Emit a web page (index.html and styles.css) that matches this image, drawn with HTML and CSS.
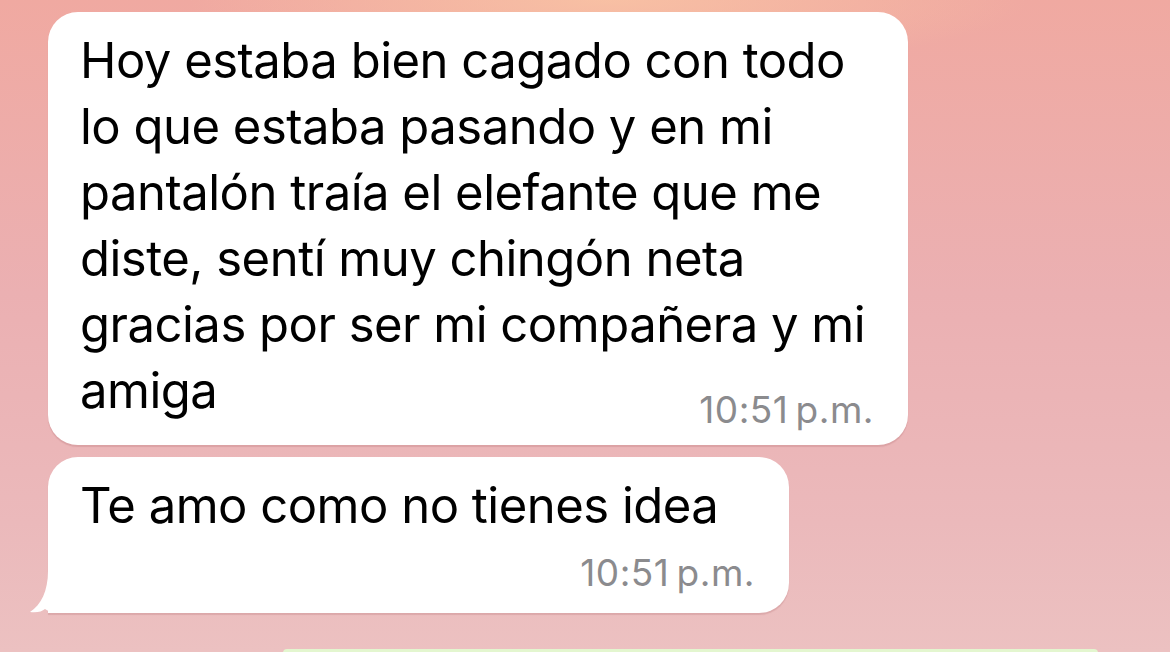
FILE: index.html
```html
<!DOCTYPE html>
<html lang="es">
<head>
    <meta charset="UTF-8">
    <meta name="viewport" content="width=device-width, initial-scale=1.0">
    <title>Chat</title>
    <link rel="stylesheet" href="styles.css">
</head>
<body>
    <div class="chat">
        <div class="bubble bubble-long">
            <p class="text">Hoy estaba bien cagado con todo<br>lo que estaba pasando y en mi<br>pantalón traía el elefante que me<br>diste, sentí muy chingón neta<br>gracias por ser mi compañera y mi<br>amiga</p>
            <div class="time time-inline">10:51&#8239;p.m.</div>
        </div>

        <div class="bubble bubble-short">
            <p class="text">Te amo como no tienes idea</p>
            <div class="time">10:51&#8239;p.m.</div>
            <svg class="tail" width="50" height="50" viewBox="0 0 50 50">
                <path d="M18 0 L18 8 C18 28 11 42 0 49 C7 50 12 48.5 15 46 C20 50 28 50 36 50 L50 50 L50 0 Z" fill="#fff"/>
            </svg>
        </div>

        <div class="outgoing"></div>
    </div>
</body>
</html>
```

FILE: styles.css
```css
html, body {
    height: 100%;
}
body {
    margin: 0;
    overflow: hidden;
    font-family: Inter, "Noto Sans", sans-serif;
    background:
        radial-gradient(ellipse 420px 70px at 52% 0, rgba(249, 196, 164, 0.85), rgba(249, 196, 164, 0)),
        linear-gradient(180deg, #f0a9a1 0%, #ebb0b2 45%, #ebb9bb 80%, #ecc1c1 100%);
}
.chat {
    padding: 12px 0 0 48px;
    display: flex;
    flex-direction: column;
    align-items: flex-start;
}
.bubble {
    position: relative;
    background: #fff;
    border-radius: 30px;
    padding: 16px 34px 13px 32px;
    box-shadow: 0 2px 1px rgba(150, 70, 80, 0.18);
}
.bubble-long {
    width: 794px;
    margin-bottom: 12px;
}
.bubble-short {
    width: 675px;
    padding-bottom: 18px;
    border-bottom-left-radius: 0;
}
.text {
    margin: 0;
    font-size: 49px;
    line-height: 66px;
    color: #000;
    letter-spacing: -0.5px;
}
.time {
    font-size: 37px;
    line-height: 44px;
    letter-spacing: 0.5px;
    color: #8b8b8e;
    text-align: right;
    margin-top: 12px;
}
.time-inline {
    margin-top: -36px;
}
.tail {
    position: absolute;
    left: -18px;
    bottom: 0;
}
.outgoing {
    margin: 36px 0 0 235px;
    width: 815px;
    height: 4px;
    background: #e3f6cf;
    border-radius: 22px 22px 0 0;
}
```
